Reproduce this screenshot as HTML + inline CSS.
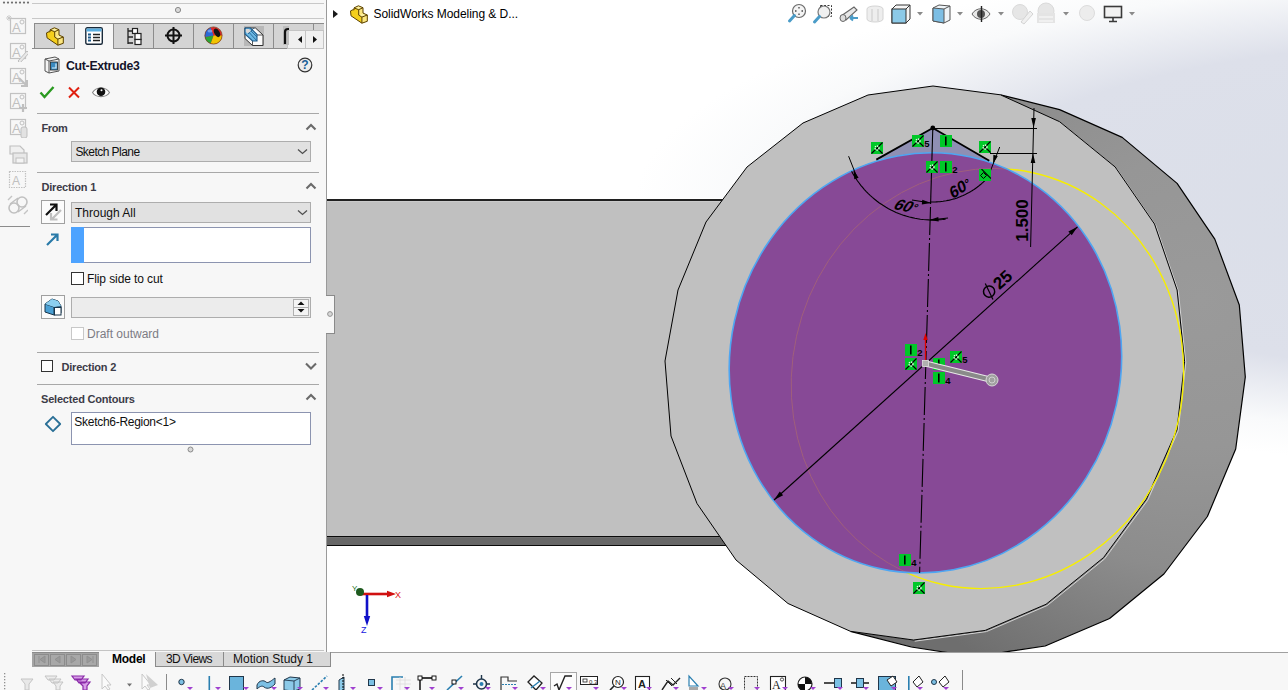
<!DOCTYPE html>
<html><head><meta charset="utf-8">
<style>
*{box-sizing:border-box;margin:0;padding:0}
html,body{width:1288px;height:690px;overflow:hidden;background:#f7f7f7;font-family:"Liberation Sans",sans-serif;position:relative}
.a{position:absolute}
.t{position:absolute;white-space:nowrap;color:#1e1e1e}
</style></head><body>
<div class="a" style="left:327px;top:0;width:961px;height:652px;overflow:hidden;background:radial-gradient(890px 259px at 1197px 205px,#dadee8 0%,#dde0ea 64.4%,#f9fafb 87.7%,#ffffff 100%)"></div>
<div class="a" style="left:326px;top:0;width:1px;height:652px;background:#9a9a9a"></div>
<svg class="a" style="left:0;top:0" width="33" height="6"><circle cx="4" cy="2.6" r="1.1" fill="#707070"/><circle cx="8" cy="2.6" r="1.1" fill="#707070"/><circle cx="12" cy="2.6" r="1.1" fill="#707070"/><circle cx="16" cy="2.6" r="1.1" fill="#707070"/><circle cx="20" cy="2.6" r="1.1" fill="#707070"/><circle cx="24" cy="2.6" r="1.1" fill="#707070"/><circle cx="28" cy="2.6" r="1.1" fill="#707070"/></svg>
<div class="a" style="left:32px;top:3px;width:292px;height:1px;background:#c8c8c8"></div>
<svg class="a" style="left:174px;top:6px" width="8" height="8"><circle cx="4" cy="4" r="2.6" fill="#d8d8d8" stroke="#8a8a8a" stroke-width="1"/></svg>
<div class="a" style="left:32px;top:18px;width:292px;height:1px;background:#c8c8c8"></div>
<div class="a" style="left:34px;top:23px;width:290px;height:26px;background:#d4d4d4;border-top:1px solid #8c8c8c"></div>
<div class="a" style="left:32px;top:48px;width:292px;height:1px;background:#8c8c8c"></div>
<div class="a" style="left:74px;top:23px;width:1px;height:26px;background:#8c8c8c"></div>
<div class="a" style="left:113px;top:23px;width:1px;height:26px;background:#8c8c8c"></div>
<div class="a" style="left:153px;top:23px;width:1px;height:26px;background:#8c8c8c"></div>
<div class="a" style="left:193px;top:23px;width:1px;height:26px;background:#8c8c8c"></div>
<div class="a" style="left:233px;top:23px;width:1px;height:26px;background:#8c8c8c"></div>
<div class="a" style="left:273px;top:23px;width:1px;height:26px;background:#8c8c8c"></div>
<div class="a" style="left:313px;top:23px;width:1px;height:26px;background:#8c8c8c"></div>
<div class="a" style="left:34px;top:23px;width:1px;height:26px;background:#8c8c8c"></div>
<div class="a" style="left:75px;top:24px;width:38px;height:25px;background:#f7f7f7"></div>
<div class="a" style="left:287px;top:30px;width:37px;height:19px;background:#f0f0f0;border:1px solid #c4c4c4"></div>
<div class="a" style="left:305px;top:30px;width:1px;height:19px;background:#c4c4c4"></div>
<svg class="a" style="left:287px;top:30px" width="37" height="19"><polygon points="11,9.5 15,6 15,13" fill="#111"/><polygon points="30,9.5 26,6 26,13" fill="#111"/></svg>
<div class="t" style="left:66px;top:59.79px;font-size:12.3px;line-height:12.3px;font-weight:bold;color:#14142a;letter-spacing:-0.3px">Cut-Extrude3</div>
<svg class="a" style="left:296px;top:56px" width="18" height="18"><circle cx="9" cy="9" r="6.8" fill="#ececec" stroke="#333" stroke-width="1.2"/><text x="9" y="13.2" text-anchor="middle" font-family="Liberation Sans" font-weight="bold" font-size="12" fill="#1a5e96">?</text></svg>
<div class="a" style="left:37px;top:113px;width:282px;height:1px;background:#a8a8a8"></div>
<div class="a" style="left:37px;top:172px;width:282px;height:1px;background:#a8a8a8"></div>
<div class="a" style="left:37px;top:352px;width:282px;height:1px;background:#a8a8a8"></div>
<div class="a" style="left:37px;top:384px;width:282px;height:1px;background:#a8a8a8"></div>
<div class="t" style="left:41.5px;top:122.99px;font-size:11px;line-height:11px;font-weight:bold;color:#3c3c48;letter-spacing:-0.4px">From</div>
<svg class="a" style="left:305px;top:123px" width="12" height="8"><polyline points="1.5,6.5 6,2 10.5,6.5" fill="none" stroke="#6a6a6a" stroke-width="2.1"/></svg>
<div class="a" style="left:71px;top:141px;width:240px;height:21px;background:#e1e1e1;border:1px solid #adadad"></div>
<div class="t" style="left:75.4px;top:146.04px;font-size:12px;line-height:12px;font-weight:normal;color:#101010;letter-spacing:-0.55px">Sketch Plane</div>
<svg class="a" style="left:297px;top:148px" width="11" height="7"><polyline points="1,1.5 5.5,5.5 10,1.5" fill="none" stroke="#505050" stroke-width="1.3"/></svg>
<div class="t" style="left:41.5px;top:181.89px;font-size:11px;line-height:11px;font-weight:bold;color:#3c3c48;letter-spacing:-0.2px">Direction 1</div>
<svg class="a" style="left:305px;top:182px" width="12" height="8"><polyline points="1.5,6.5 6,2 10.5,6.5" fill="none" stroke="#6a6a6a" stroke-width="2.1"/></svg>
<div class="a" style="left:41px;top:200px;width:24px;height:24px;background:#fbfbfb;border:1px solid #a0a0a0"></div>
<div class="a" style="left:71px;top:202px;width:240px;height:21px;background:#e1e1e1;border:1px solid #adadad"></div>
<div class="t" style="left:75px;top:206.84px;font-size:12px;line-height:12px;font-weight:normal;color:#101010;">Through All</div>
<svg class="a" style="left:297px;top:209px" width="11" height="7"><polyline points="1,1.5 5.5,5.5 10,1.5" fill="none" stroke="#505050" stroke-width="1.3"/></svg>
<div class="a" style="left:71px;top:227px;width:240px;height:36px;background:#fff;border:1px solid #8c94b0"></div>
<div class="a" style="left:71px;top:227px;width:13px;height:36px;background:#4da3ff"></div>
<div class="a" style="left:71px;top:272px;width:13px;height:13px;background:#fff;border:1px solid #333"></div>
<div class="t" style="left:87px;top:273.04px;font-size:12px;line-height:12px;font-weight:normal;color:#101010;letter-spacing:-0.1px">Flip side to cut</div>
<div class="a" style="left:41px;top:295px;width:24px;height:24px;background:#fbfbfb;border:1px solid #a0a0a0"></div>
<div class="a" style="left:71px;top:297px;width:240px;height:21px;background:#ececec;border:1px solid #adadad"></div>
<div class="a" style="left:293px;top:299px;width:16px;height:17px;background:#f4f4f4;border:1px solid #b0b0b0"></div>
<div class="a" style="left:293px;top:307px;width:16px;height:1px;background:#b0b0b0"></div>
<svg class="a" style="left:293px;top:299px" width="16" height="17"><polygon points="8,2.5 11.5,6 4.5,6" fill="#111"/><polygon points="8,13.5 11.5,10 4.5,10" fill="#111"/></svg>
<div class="a" style="left:71px;top:327px;width:13px;height:13px;background:#fff;border:1px solid #c8c8c8"></div>
<div class="t" style="left:87px;top:328.04px;font-size:12px;line-height:12px;font-weight:normal;color:#7c7c84;">Draft outward</div>
<div class="a" style="left:41px;top:360px;width:12px;height:12px;background:#fff;border:1px solid #333"></div>
<div class="t" style="left:61.5px;top:361.69px;font-size:11px;line-height:11px;font-weight:bold;color:#3c3c48;letter-spacing:-0.2px">Direction 2</div>
<svg class="a" style="left:305px;top:362px" width="12" height="8"><polyline points="1,1.5 6.0,6.5 11,1.5" fill="none" stroke="#6a6a6a" stroke-width="2.1"/></svg>
<div class="t" style="left:41px;top:393.69px;font-size:11px;line-height:11px;font-weight:bold;color:#3c3c48;letter-spacing:-0.2px">Selected Contours</div>
<svg class="a" style="left:305px;top:393px" width="12" height="8"><polyline points="1.5,6.5 6,2 10.5,6.5" fill="none" stroke="#6a6a6a" stroke-width="2.1"/></svg>
<svg class="a" style="left:44px;top:415px" width="18" height="18"><polygon points="9,1.8 16.2,9 9,16.2 1.8,9" fill="none" stroke="#2a6f96" stroke-width="1.8" stroke-linejoin="round"/></svg>
<div class="a" style="left:71px;top:412px;width:240px;height:33px;background:#fff;border:1px solid #8c94b0"></div>
<div class="t" style="left:74.3px;top:416.04px;font-size:12px;line-height:12px;font-weight:normal;color:#101010;letter-spacing:-0.28px">Sketch6-Region&lt;1&gt;</div>
<svg class="a" style="left:186px;top:445px" width="9" height="9"><circle cx="4.5" cy="4.5" r="2.5" fill="#d8d8d8" stroke="#8a8a8a" stroke-width="1"/></svg>
<div class="a" style="left:0px;top:226px;width:30px;height:1px;background:#8c8c8c"></div>
<svg class="a" style="left:46px;top:27px" width="19" height="19"><g transform="translate(0.5,0.5)"><path d="M0,5.4 L2.7,4.1 L3.5,4.6 V2.4 L7.9,0.3 L12.5,2.2 V7.6 L16.8,9.5 V15.8 L11.4,17.7 L0.5,10.3Z" fill="#f5cf1c"/><path d="M8.2,4.2 L12.5,2.2 V7.6 L8.2,9.6Z M11.4,11.6 L16.8,9.5 V15.8 L11.4,17.7Z" fill="#fbe680"/><path d="M3.5,2.4 L7.9,0.3 L12.5,2.2 L8.2,4.2Z M8.2,9.6 L12.5,7.6 L16.8,9.5 L11.4,11.6Z" fill="#fdf0a0"/><path d="M0,5.4 L2.7,4.1 L3.5,4.6 V2.4 L7.9,0.3 L12.5,2.2 V7.6 L16.8,9.5 V15.8 L11.4,17.7 L0.5,10.3Z M3.5,2.4 L8.2,4.2 L12.5,2.2 M8.2,4.2 V9.6 L11.4,11.6 L16.8,9.5 M11.4,11.6 V17.7" fill="none" stroke="#5a4000" stroke-width="1" stroke-linejoin="round"/></g></svg>
<svg class="a" style="left:85px;top:27px" width="19" height="19"><rect x="0.8" y="0.8" width="16.5" height="16.5" rx="1.5" fill="#fff" stroke="#1a2a3a" stroke-width="1.4"/><rect x="1.5" y="1.5" width="15" height="3" fill="#5aaee0"/><path d="M3,7.5 H6 M3,10.5 H6 M3,13.5 H6" stroke="#1e5a8a" stroke-width="2"/><path d="M8,7.5 H15 M8,10.5 H15 M8,13.5 H15" stroke="#222" stroke-width="1.3"/></svg>
<svg class="a" style="left:125px;top:27px" width="18" height="19"><path d="M3,1 V17 M3,4 H8 M3,10 H8 M3,16 H8" stroke="#222" stroke-width="1.3" fill="none"/><rect x="7.5" y="1.5" width="5" height="5" fill="#fff" stroke="#222" stroke-width="1.2"/><rect x="10" y="6.5" width="6" height="6" fill="#fff" stroke="#222" stroke-width="1.2"/><rect x="10" y="12.5" width="6" height="5" fill="#fff" stroke="#222" stroke-width="1.2"/></svg>
<svg class="a" style="left:164px;top:26px" width="19" height="19"><circle cx="9.5" cy="9.5" r="6" fill="none" stroke="#111" stroke-width="2"/><path d="M9.5,1 V18 M1,9.5 H18" stroke="#111" stroke-width="2"/></svg>
<svg class="a" style="left:204px;top:26px" width="19" height="19"><circle cx="9.5" cy="9.5" r="8.6" fill="#e02828"/><path d="M9.5,9.5 L18.1,9.5 A8.6,8.6 0 0 1 6.6,17.6Z" fill="#f2c400"/><path d="M9.5,9.5 L6.6,17.6 A8.6,8.6 0 0 1 0.9,11Z" fill="#28a838"/><path d="M9.5,9.5 L0.9,11 A8.6,8.6 0 0 1 6.6,1.4Z" fill="#2a6ad8"/><ellipse cx="13" cy="6.8" rx="2.6" ry="4.6" transform="rotate(-28 13 6.8)" fill="#151515"/><circle cx="9.5" cy="9.5" r="8.6" fill="none" stroke="#7a3a1a" stroke-width="0.7"/><ellipse cx="6" cy="5" rx="2.5" ry="1.6" fill="#fff" opacity="0.35"/></svg>
<svg class="a" style="left:244px;top:26px" width="20" height="20"><rect x="0" y="0" width="20" height="20" fill="#b8b8b8"/><path d="M1,2 H11.5 L19,9 V19.5 H8.5 L1,12.5Z" fill="#fafafa" stroke="#333" stroke-width="1"/><path d="M8.5,9 H19 M8.5,9 V19.5 M1,2 L8.5,9" fill="none" stroke="#444" stroke-width="0.9"/><path d="M1,2 H6.5 L13,8.5 V15 H8.5 L1,8Z" fill="#6ab8e4" stroke="#1e5a8a" stroke-width="1.1"/><path d="M1,2 L13,15 M4,8 L10,2 M7,5 L13,11" stroke="#1e5a8a" stroke-width="0.8"/><path d="M1.8,3 H5 L7,5 L3.5,7.5 L1.8,6Z" fill="#d8d8d8"/></svg>
<svg class="a" style="left:283px;top:26px" width="6" height="19"><rect x="0" y="0" width="6" height="19" fill="#bdbdbd"/><path d="M2,18 V6 Q2,3 5,3 H6" fill="none" stroke="#111" stroke-width="2.2"/></svg>
<svg class="a" style="left:44px;top:56px" width="16" height="18"><path d="M1,3 L11,1 L15,3 V15 L5,17 L1,15Z" fill="#f4f4f4" stroke="#555" stroke-width="1"/><path d="M1,3 L5,5 V17 M5,5 L15,3" fill="none" stroke="#555" stroke-width="1"/><rect x="6.5" y="6" width="7" height="8" fill="#3a8ac0" stroke="#222" stroke-width="0.8"/><path d="M8,12 H12 V7.5" fill="none" stroke="#d8eef8" stroke-width="1.2"/></svg>
<svg class="a" style="left:39px;top:85px" width="16" height="14"><path d="M1.5,7.5 L5.5,12 L14.5,2" fill="none" stroke="#2a9a20" stroke-width="2.4"/></svg>
<svg class="a" style="left:67px;top:86px" width="14" height="13"><path d="M2,1.5 L12,11.5 M12,1.5 L2,11.5" stroke="#e02010" stroke-width="2"/></svg>
<svg class="a" style="left:91px;top:85px" width="20" height="14"><path d="M1.5,7.5 C5,1.5 15,1.5 18.5,7.5 C15,13 5,13 1.5,7.5Z" fill="#fff" stroke="#888" stroke-width="1.1"/><circle cx="10" cy="6.8" r="4.3" fill="#111"/><circle cx="10.5" cy="5.3" r="1" fill="#fff"/></svg>
<svg class="a" style="left:41px;top:200px" width="24" height="24"><path d="M5,15 L15,5 M9,4.5 H15.5 V11" fill="none" stroke="#111" stroke-width="2.2"/><path d="M20,10 L11,19 M10,13 V19.5 H16.5" fill="none" stroke="#bfbfbf" stroke-width="2.2"/></svg>
<svg class="a" style="left:45px;top:231px" width="16" height="16"><path d="M2,14 L12,4 M6,3.5 H12.5 V10" fill="none" stroke="#2a7aa8" stroke-width="2.2"/></svg>
<svg class="a" style="left:41px;top:295px" width="24" height="24"><path d="M4,9 L11,4 L17,6 L20,11 V18 L13,20 L4,17Z" fill="#4aa0d4" stroke="#18344a" stroke-width="1"/><path d="M4,9 L13,12 L20,11 M13,12 V20" fill="none" stroke="#18344a" stroke-width="1"/><rect x="13.5" y="12.5" width="6.5" height="7.5" fill="#fff" stroke="#18344a" stroke-width="1"/><path d="M4,9 L11,4 L17,6 L20,11 L13,12Z" fill="#8ccff0"/></svg>
<svg class="a" style="left:6px;top:15px" width="22" height="22"><rect x="4.5" y="3.5" width="15" height="15" fill="none" stroke="#c2c2c2" stroke-width="1.2"/><text x="6" y="16.5" font-family="Liberation Sans" font-size="13" fill="#c0c0c0">A</text><circle cx="16" cy="7" r="2" fill="none" stroke="#c0c0c0" stroke-width="1"/><path d="M1,1 L5,5 M5,1 L1,5 M3,0 V6 M0,3 H6" stroke="#c6c6c6" stroke-width="0.9"/></svg>
<svg class="a" style="left:6px;top:40px" width="22" height="22"><rect x="4.5" y="3.5" width="15" height="15" fill="none" stroke="#c2c2c2" stroke-width="1.2"/><text x="6" y="16.5" font-family="Liberation Sans" font-size="13" fill="#c0c0c0">A</text><circle cx="16" cy="7" r="2" fill="none" stroke="#c0c0c0" stroke-width="1"/><path d="M12,21 L21,11 L23,13 L14,23Z" fill="#e8e8e8" stroke="#bfbfbf" stroke-width="1"/></svg>
<svg class="a" style="left:6px;top:65px" width="22" height="22"><rect x="4.5" y="3.5" width="15" height="15" fill="none" stroke="#c2c2c2" stroke-width="1.2"/><text x="6" y="16.5" font-family="Liberation Sans" font-size="13" fill="#c0c0c0">A</text><circle cx="16" cy="7" r="2" fill="none" stroke="#c0c0c0" stroke-width="1"/><path d="M13,13 L21,21 M21,15 V21 H15" fill="none" stroke="#bfbfbf" stroke-width="2"/></svg>
<svg class="a" style="left:6px;top:90px" width="22" height="22"><rect x="4.5" y="3.5" width="15" height="15" fill="none" stroke="#c2c2c2" stroke-width="1.2"/><text x="6" y="16.5" font-family="Liberation Sans" font-size="13" fill="#c0c0c0">A</text><circle cx="16" cy="7" r="2" fill="none" stroke="#c0c0c0" stroke-width="1"/><path d="M17,14 V22 M13,18 H21" stroke="#bfbfbf" stroke-width="2.2"/></svg>
<svg class="a" style="left:6px;top:116px" width="22" height="22"><rect x="4.5" y="3.5" width="15" height="15" fill="none" stroke="#c2c2c2" stroke-width="1.2"/><text x="6" y="16.5" font-family="Liberation Sans" font-size="13" fill="#c0c0c0">A</text><circle cx="16" cy="7" r="2" fill="none" stroke="#c0c0c0" stroke-width="1"/><rect x="15" y="11" width="6" height="11" rx="2" fill="#e2e2e2" stroke="#bfbfbf" stroke-width="1"/></svg>
<svg class="a" style="left:6px;top:142px" width="22" height="22"><path d="M4,4 H14 L18,8 V12 H4Z" fill="#f0f0f0" stroke="#c0c0c0" stroke-width="1.2"/><rect x="7" y="11" width="14" height="10" fill="#e8e8e8" stroke="#bfbfbf" stroke-width="1.2"/><rect x="10" y="16" width="8" height="5" fill="#f4f4f4" stroke="#bfbfbf" stroke-width="1"/></svg>
<svg class="a" style="left:6px;top:168px" width="22" height="22"><rect x="3.5" y="3.5" width="16" height="16" fill="none" stroke="#c2c2c2" stroke-width="1.2" stroke-dasharray="1.5 1"/><text x="6" y="17" font-family="Liberation Sans" font-size="12" fill="#c0c0c0">A</text></svg>
<svg class="a" style="left:6px;top:194px" width="22" height="22"><circle cx="8" cy="14" r="5" fill="none" stroke="#c0c0c0" stroke-width="1.6"/><circle cx="16" cy="8" r="5" fill="none" stroke="#c0c0c0" stroke-width="1.6"/><path d="M4,10 L12,4 M12,18 L20,12" stroke="#c0c0c0" stroke-width="1.4"/><path d="M2,6 L6,2 M18,20 L22,16" stroke="#c4c4c4" stroke-width="1.4"/></svg>
<svg class="a" style="left:0;top:0" width="1288" height="690" viewBox="0 0 1288 690">
<defs><clipPath id="gc"><rect x="327" y="0" width="961" height="652"/></clipPath><clipPath id="pc"><ellipse cx="925.43" cy="362.83" rx="195.5" ry="210.76" transform="rotate(12.5 925.43 362.83)"/></clipPath><radialGradient id="sideg" gradientUnits="userSpaceOnUse" cx="1200" cy="300" r="420"><stop offset="0" stop-color="#9a9a9a"/><stop offset="0.35" stop-color="#969696"/><stop offset="0.48" stop-color="#929292"/><stop offset="0.64" stop-color="#8c8c8c"/><stop offset="0.84" stop-color="#7b7b7b"/><stop offset="1" stop-color="#6e6e6e"/></radialGradient><symbol id="mc" viewBox="0 0 12 12"><rect width="12" height="12" fill="#00c828"/><path d="M0.5,11.5 L11.5,0.5 M6,6 L11.5,11.5" stroke="#000" stroke-width="1.1"/><circle cx="6" cy="6" r="2" fill="none" stroke="#e8ffe8" stroke-width="1.3" stroke-dasharray="1.3 0.8"/></symbol>
<symbol id="mv" viewBox="0 0 12 12"><rect width="12" height="12" fill="#00c828"/><rect x="5" y="1.5" width="1.6" height="9" fill="#000"/></symbol>
<symbol id="md" viewBox="0 0 12 12"><rect width="12" height="12" fill="#00c828"/><path d="M2.5,0 L12,9.5" stroke="#000" stroke-width="1.1"/><polygon points="1.5,6.5 4.5,3.5 7.5,6.5 4.5,9.5" fill="none" stroke="#000" stroke-width="1"/></symbol></defs>
<g clip-path="url(#gc)">
<rect x="320" y="198" width="420" height="1" fill="#ffffff"/>
<rect x="320" y="199" width="420" height="2" fill="#202020"/>
<rect x="320" y="201" width="420" height="1" fill="#cacaca"/>
<rect x="320" y="202" width="420" height="334" fill="#c0c0c0"/>
<rect x="320" y="536" width="420" height="1" fill="#0a0a0a"/>
<rect x="320" y="537" width="420" height="1" fill="#707070"/>
<rect x="320" y="538" width="420" height="7" fill="#676767"/>
<rect x="320" y="545" width="420" height="1" fill="#0a0a0a"/>
<polygon points="1000.4,94.8 1059.6,109.6 1122.2,137.4 1177.1,183.4 1214.8,239.1 1239.3,305.0 1245.3,377.0 1235.7,449.0 1207.4,516.5 1163.9,574.0 1109.6,618.5 1045.2,646.0 1010.4,651.2 975.0,657.0 944.0,652.0 911.3,647.0 850.4,631.3 913.5,640.0 985.2,630.4 1046.0,604.3 1103.5,557.6 1146.5,499.0 1177.0,429.6 1184.6,361.6 1177.1,290.0 1154.5,224.0 1115.2,167.0 1059.6,121.7 1000.4,94.8" fill="url(#sideg)" stroke="none"/>
<polyline points="1000.4,94.8 1059.6,109.6 1122.2,137.4 1177.1,183.4 1214.8,239.1 1239.3,305.0 1245.3,377.0 1235.7,449.0 1207.4,516.5 1163.9,574.0 1109.6,618.5 1045.2,646.0 1010.4,651.2 975.0,657.0 944.0,652.0 911.3,647.0 850.4,631.3" fill="none" stroke="#000" stroke-width="1.2" stroke-linejoin="round"/>
<polyline points="1001.6,96.0 1060.8,122.9 1116.4,168.2 1155.7,225.2 1178.3,291.2 1185.8,362.8 1178.2,430.8 1147.7,500.2 1104.7,558.8 1047.2,605.5 986.4,631.6 914.7,641.2" fill="none" stroke="#d4d4d4" stroke-width="1"/>
<polygon points="933.0,86.0 1000.4,94.8 1059.6,121.7 1115.2,167.0 1154.5,224.0 1177.1,290.0 1184.6,361.6 1177.0,429.6 1146.5,499.0 1103.5,557.6 1046.0,604.3 985.2,630.4 913.5,640.0 850.4,631.3 788.0,603.5 736.0,560.0 697.0,503.5 671.0,436.0 665.0,361.0 678.0,290.0 706.0,222.0 747.0,167.0 803.0,123.0 868.0,95.0" fill="#c0c0c0" stroke="#000" stroke-width="1" stroke-linejoin="round"/>
<ellipse cx="987.4" cy="378.5" rx="195.5" ry="210.76" transform="rotate(12.5 987.4 378.5)" fill="none" stroke="#f6ee00" stroke-width="1.4"/>
<polygon points="932.8,128 876.3,159.6 932,152 989.3,160.7" fill="#8f8fb3"/>
<ellipse cx="925.43" cy="362.83" rx="195.5" ry="210.76" transform="rotate(12.5 925.43 362.83)" fill="#874996"/>
<g clip-path="url(#pc)"><ellipse cx="987.4" cy="378.5" rx="195.5" ry="210.76" transform="rotate(12.5 987.4 378.5)" fill="none" stroke="#a0607a" stroke-width="0.9"/></g>
<ellipse cx="925.43" cy="362.83" rx="195.5" ry="210.76" transform="rotate(12.5 925.43 362.83)" fill="none" stroke="#4ea6f2" stroke-width="1.6"/>
<polyline points="876.3,159.6 932.8,128 989.3,160.7" fill="none" stroke="#000" stroke-width="1.8" stroke-linejoin="round"/>
<circle cx="932.8" cy="128" r="2.4" fill="#000"/>
<line x1="932.8" y1="128" x2="930.6" y2="204" stroke="#000" stroke-width="1.1"/>
<line x1="930.6" y1="204" x2="919.6" y2="573" stroke="#000" stroke-width="1.1" stroke-dasharray="28 3 2 3" stroke-dashoffset="33"/>
<line x1="933" y1="128.5" x2="1037" y2="128.5" stroke="#000" stroke-width="1"/>
<line x1="990" y1="153.5" x2="1037" y2="153.5" stroke="#000" stroke-width="1"/>
<line x1="1034" y1="108" x2="1030.6" y2="247" stroke="#000" stroke-width="1"/>
<polygon points="1033.6,128.0 1031.3,118.0 1035.9,118.0" fill="#000"/>
<polygon points="1033.0,153.0 1035.3,163.0 1030.7,163.0" fill="#000"/>
<text x="0" y="0" transform="translate(1027.5,220.5) rotate(-90)" text-anchor="middle" font-family="Liberation Sans" font-weight="bold" font-size="17" fill="#000">1.500</text>
<line x1="774" y1="500" x2="1077.5" y2="226.8" stroke="#000" stroke-width="1.1"/>
<polygon points="774.0,500.0 779.8,491.5 783.1,495.2" fill="#000"/>
<polygon points="1077.5,226.8 1071.7,235.3 1068.4,231.6" fill="#000"/>
<g transform="translate(989.1,291.6) rotate(-42)"><circle cx="0" cy="0" r="5.6" fill="none" stroke="#000" stroke-width="1.5"/><line x1="2.5" y1="-8.5" x2="-2.5" y2="8.5" stroke="#000" stroke-width="1.2"/><text x="8.5" y="6" font-family="Liberation Sans" font-size="17" font-weight="bold" fill="#000">25</text></g>
<polyline points="851.6,171.2 852.9,173.7 854.4,176.1 855.9,178.4 857.4,180.8 859.1,183.0 860.8,185.3 862.6,187.4 864.4,189.6 866.3,191.6 868.3,193.6 870.4,195.6 872.4,197.4 874.6,199.2 876.8,201.0 879.0,202.7 881.4,204.3 883.7,205.8 886.1,207.3 888.5,208.7 891.0,210.0 893.6,211.2 896.1,212.4 898.7,213.5 901.3,214.5 904.0,215.4 906.7,216.2 909.4,217.0 912.1,217.6 914.9,218.2 917.6,218.7 920.4,219.2 923.2,219.5 926.0,219.7 928.8,219.9 931.6,220.0 934.4,220.0 937.2,219.9 940.0,219.7 942.8,219.5 945.6,219.1" fill="none" stroke="#000" stroke-width="1.1"/>
<line x1="930" y1="220" x2="948" y2="218" stroke="#000" stroke-width="1.1"/>
<polygon points="929.5,220.0 938.3,217.0 938.7,221.6" fill="#000"/>
<polygon points="853.5,170.0 858.6,177.7 854.3,179.3" fill="#000"/>
<line x1="848.6" y1="156.2" x2="856" y2="175" stroke="#000" stroke-width="1"/>
<polyline points="930.2,202.0 931.8,202.0 933.4,202.0 935.1,202.0 936.7,201.9 938.3,201.8 939.9,201.7 941.5,201.5 943.1,201.3 944.7,201.0 946.3,200.8 947.9,200.4 949.4,200.1 951.0,199.7 952.6,199.3 954.1,198.9 955.7,198.4 957.2,197.9 958.7,197.3 960.2,196.7 961.7,196.1 963.2,195.5 964.7,194.8 966.1,194.1 967.5,193.3 969.0,192.6 970.4,191.8 971.7,190.9 973.1,190.1 974.4,189.2 975.8,188.2 977.1,187.3 978.4,186.3 979.6,185.3 980.9,184.3 982.1,183.2 983.3,182.1 984.4,181.0 985.6,179.9 986.7,178.7 987.8,177.5" fill="none" stroke="#000" stroke-width="1.1"/>
<line x1="912" y1="200" x2="931" y2="203" stroke="#000" stroke-width="1.1"/>
<polygon points="931.0,203.0 921.8,204.4 922.3,199.8" fill="#000"/>
<line x1="999.7" y1="147" x2="990" y2="172" stroke="#000" stroke-width="1"/>
<polygon points="993.0,164.0 993.4,154.7 997.8,156.0" fill="#000"/>
<text x="0" y="0" transform="translate(903,211) rotate(12) skewX(-22)" text-anchor="middle" font-family="Liberation Sans" font-size="16" font-weight="bold" fill="#000">60<tspan font-size="11" dy="-2">°</tspan></text>
<text x="0" y="0" transform="translate(962,193) rotate(-33) skewX(-12)" text-anchor="middle" font-family="Liberation Sans" font-size="16" font-weight="bold" fill="#000">60<tspan font-size="12" dy="-1">°</tspan></text>
<line x1="925.5" y1="363.5" x2="925.5" y2="338" stroke="#e00000" stroke-width="1.3"/>
<polygon points="925.5,333.0 927.7,340.0 923.3,340.0" fill="#e00000"/>
<use href="#mc" x="871" y="142" width="12" height="12"/>
<use href="#mc" x="912" y="135" width="12" height="12"/><text x="924.3" y="146.5" font-family="Liberation Sans" font-weight="bold" font-size="9.5" fill="#000">5</text>
<use href="#mv" x="940" y="135" width="12" height="12"/>
<use href="#mc" x="979" y="141" width="12" height="12"/>
<use href="#mc" x="926" y="161" width="12" height="12"/>
<use href="#mv" x="940" y="161" width="12" height="12"/><text x="952.3" y="172.5" font-family="Liberation Sans" font-weight="bold" font-size="9.5" fill="#000">2</text>
<use href="#md" x="979" y="169" width="12" height="12"/>
<use href="#mv" x="905" y="344" width="12" height="12"/><text x="917.3" y="355.5" font-family="Liberation Sans" font-weight="bold" font-size="9.5" fill="#000">2</text>
<use href="#mc" x="905" y="358" width="12" height="12"/>
<use href="#mv" x="933" y="358" width="12" height="12"/>
<use href="#mv" x="933" y="372" width="12" height="12"/><text x="945.3" y="383.5" font-family="Liberation Sans" font-weight="bold" font-size="9.5" fill="#000">4</text>
<use href="#mc" x="950" y="351" width="12" height="12"/><text x="962.3" y="362.5" font-family="Liberation Sans" font-weight="bold" font-size="9.5" fill="#000">5</text>
<use href="#mv" x="899" y="554" width="12" height="12"/><text x="911.3" y="565.5" font-family="Liberation Sans" font-weight="bold" font-size="9.5" fill="#000">4</text>
<use href="#mc" x="913" y="582" width="12" height="12"/>
<line x1="925.5" y1="363.5" x2="992" y2="380" stroke="#e8e8e8" stroke-width="6"/>
<line x1="925.5" y1="363.5" x2="992" y2="380" stroke="#8a8a8a" stroke-width="4"/>
<rect x="922.5" y="360.5" width="6" height="6" fill="#b0b0b0" stroke="#e0e0e0" stroke-width="0.8"/>
<circle cx="992" cy="380" r="6" fill="#a0a0a0" stroke="#d8d8d8" stroke-width="1"/><circle cx="992" cy="380" r="3" fill="none" stroke="#d0d0d0" stroke-width="1"/>
<line x1="360" y1="594" x2="388" y2="594" stroke="#d01010" stroke-width="2.6"/>
<polygon points="396.0,594.0 387.0,597.2 387.0,590.8" fill="#d01010"/>
<text x="395" y="598" font-family="Liberation Sans" font-size="9" fill="#e02020">X</text>
<line x1="367" y1="595" x2="367" y2="617" stroke="#1010c8" stroke-width="2.6"/>
<polygon points="367.0,626.0 363.8,616.0 370.2,616.0" fill="#1010c8"/>
<text x="361" y="633" font-family="Liberation Sans" font-size="9" fill="#2020e0">Z</text>
<circle cx="360" cy="592" r="4" fill="#1e5a1e"/>
<text x="352" y="591" font-family="Liberation Sans" font-size="8" fill="#207020">Y</text>
</g></svg>
<div class="a" style="left:327px;top:652px;width:961px;height:1px;background:#a0a0a0"></div>
<div class="a" style="left:32px;top:650px;width:292px;height:1px;background:#c4c4c4"></div>
<div class="a" style="left:326px;top:295px;width:9px;height:39px;background:#f7f7f7;border:1px solid #8a8a8a;border-left:none"></div>
<svg class="a" style="left:326px;top:310px" width="8" height="8"><circle cx="4" cy="4" r="2.4" fill="#d8d8d8" stroke="#8a8a8a" stroke-width="0.9"/></svg>
<div class="a" style="left:32px;top:652px;width:67px;height:15px;background:#a4a4a4;border-top:1px solid #8a8a8a"></div>
<div class="a" style="left:34px;top:654px;width:15px;height:12px;border:1px solid #8c8c8c;background:#a8a8a8"></div>
<div class="a" style="left:50px;top:654px;width:15px;height:12px;border:1px solid #8c8c8c;background:#a8a8a8"></div>
<div class="a" style="left:66px;top:654px;width:15px;height:12px;border:1px solid #8c8c8c;background:#a8a8a8"></div>
<div class="a" style="left:82px;top:654px;width:15px;height:12px;border:1px solid #8c8c8c;background:#a8a8a8"></div>
<svg class="a" style="left:32px;top:652px" width="67" height="15"><path d="M7,4 V11 M13,4 L8,7.5 L13,11Z" stroke="#909090" fill="#9a9a9a" stroke-width="1"/><path d="M28,4 L23,7.5 L28,11Z" stroke="#909090" fill="#9a9a9a" stroke-width="1"/><path d="M39,4 L44,7.5 L39,11Z" stroke="#909090" fill="#9a9a9a" stroke-width="1"/><path d="M55,4 L60,7.5 L55,11Z M61,4 V11" stroke="#909090" fill="#9a9a9a" stroke-width="1"/></svg>
<div class="t" style="left:112px;top:652.84px;font-size:12px;line-height:12px;font-weight:bold;color:#000;letter-spacing:-0.25px">Model</div>
<div class="a" style="left:155px;top:652px;width:69px;height:15px;background:#d8d8d8;border:1px solid #8a8a8a;border-top:none"></div>
<div class="t" style="left:166px;top:652.84px;font-size:12px;line-height:12px;font-weight:normal;color:#101010;letter-spacing:-0.55px">3D Views</div>
<div class="a" style="left:223px;top:652px;width:108px;height:15px;background:#d8d8d8;border:1px solid #8a8a8a;border-top:none"></div>
<div class="t" style="left:233px;top:652.84px;font-size:12px;line-height:12px;font-weight:normal;color:#101010;">Motion Study 1</div>
<svg class="a" style="left:330px;top:8px" width="10" height="12"><polygon points="3,2 8,6 3,10" fill="#1a1a1a"/></svg>
<svg class="a" style="left:350px;top:5px" width="19" height="19"><g transform="translate(0.5,0.5)"><path d="M0,5.4 L2.7,4.1 L3.5,4.6 V2.4 L7.9,0.3 L12.5,2.2 V7.6 L16.8,9.5 V15.8 L11.4,17.7 L0.5,10.3Z" fill="#f5cf1c"/><path d="M8.2,4.2 L12.5,2.2 V7.6 L8.2,9.6Z M11.4,11.6 L16.8,9.5 V15.8 L11.4,17.7Z" fill="#fbe680"/><path d="M3.5,2.4 L7.9,0.3 L12.5,2.2 L8.2,4.2Z M8.2,9.6 L12.5,7.6 L16.8,9.5 L11.4,11.6Z" fill="#fdf0a0"/><path d="M0,5.4 L2.7,4.1 L3.5,4.6 V2.4 L7.9,0.3 L12.5,2.2 V7.6 L16.8,9.5 V15.8 L11.4,17.7 L0.5,10.3Z M3.5,2.4 L8.2,4.2 L12.5,2.2 M8.2,4.2 V9.6 L11.4,11.6 L16.8,9.5 M11.4,11.6 V17.7" fill="none" stroke="#5a4000" stroke-width="1" stroke-linejoin="round"/></g></svg>
<div class="t" style="left:373.5px;top:8.44px;font-size:12px;line-height:12px;font-weight:normal;color:#000;letter-spacing:-0.05px">SolidWorks Modeling &amp; D...</div>
<svg class="a" style="left:780px;top:0" width="360" height="28"><circle cx="19" cy="11" r="6.5" fill="#f4f4f4" stroke="#6a6a6a" stroke-width="1.2"/><path d="M19,7 V8.5 M15,11 H16.5 M23,11 H21.5 M19,15 V13.5" stroke="#444" stroke-width="1.3"/><line x1="14.5" y1="15.5" x2="9.5" y2="21" stroke="#4a9cc8" stroke-width="3" stroke-linecap="round"/><rect x="40.5" y="5.5" width="11" height="11" fill="none" stroke="#333" stroke-width="1" stroke-dasharray="2 1.5"/><circle cx="44" cy="12" r="6" fill="#f0f0f0" stroke="#777" stroke-width="1.2"/><line x1="39.5" y1="16.5" x2="34.5" y2="22" stroke="#4a9cc8" stroke-width="3" stroke-linecap="round"/><path d="M61,16 L74,7 L77,10 L66,20Z" fill="#e8e8e8" stroke="#666" stroke-width="1.1"/><ellipse cx="63" cy="18" rx="3" ry="3.5" fill="#ddd" stroke="#666" stroke-width="1"/><path d="M70,18 H78 M70,18 L73,15.5 M70,18 L73,20.5" stroke="#4a9cc8" stroke-width="2"/><path d="M87,9 C87,5 103,5 103,9 V19 C103,23 87,23 87,19Z" fill="#eeeeee" stroke="#d4d4d4" stroke-width="1"/><path d="M92,9 V21 M98,9 V21" stroke="#dcdcdc" stroke-width="2"/><path d="M112,9 L116,5 H130 V19 L126,23 H112Z" fill="#f6f6f6" stroke="#333" stroke-width="1"/><rect x="112" y="9" width="14" height="14" fill="#8ccae8" stroke="#333" stroke-width="1"/><path d="M126,9 L130,5" stroke="#333" stroke-width="1"/><polygon points="137,12 143,12 140,15.5" fill="#8a8a8a"/><path d="M153,8 L159,5 L170,6 V20 L164,23 L153,21Z" fill="#eef4f8" stroke="#555" stroke-width="1"/><path d="M153,8 L164,9 V23 L153,21Z" fill="#7cbee4" stroke="#555" stroke-width="1"/><path d="M164,9 L170,6" stroke="#555" stroke-width="1"/><polygon points="177,12 183,12 180,15.5" fill="#8a8a8a"/><path d="M192,14 C196,7 206,7 210,14 C206,21 196,21 192,14Z" fill="#e8e8e8" stroke="#666" stroke-width="1"/><circle cx="201" cy="14" r="4" fill="#555"/><line x1="201.5" y1="6" x2="201.5" y2="22" stroke="#222" stroke-width="1.4"/><polygon points="218,12 224,12 221,15.5" fill="#8a8a8a"/><circle cx="240" cy="12" r="7.5" fill="#e6e6e6" stroke="#dadada" stroke-width="1"/><path d="M241,22 L250,11 L253,14 L244,24Z" fill="#f0f0f0" stroke="#d4d4d4" stroke-width="1"/><circle cx="266" cy="11" r="8" fill="#e6e6e6" stroke="#dadada" stroke-width="1"/><rect x="257" y="13" width="18" height="10" fill="#e4e4e4"/><path d="M259,17 H273 M259,21 H273" stroke="#f4f4f4" stroke-width="1.5"/><polygon points="283,12 289,12 286,15.5" fill="#8a8a8a"/><circle cx="307" cy="13" r="7.5" fill="#ececec" stroke="#dcdcdc" stroke-width="1"/><rect x="324.5" y="6.5" width="17" height="11" fill="#f2f2f2" stroke="#3a3a3a" stroke-width="1.6"/><path d="M333,18 V21 M329,21.5 H337" stroke="#3a3a3a" stroke-width="1.6"/><polygon points="349,12 355,12 352,15.5" fill="#8a8a8a"/></svg>
<svg class="a" style="left:0;top:668px" width="980" height="22"><rect x="4" y="5" width="1.3" height="1.3" fill="#909090"/><rect x="4" y="8" width="1.3" height="1.3" fill="#909090"/><rect x="4" y="11" width="1.3" height="1.3" fill="#909090"/><rect x="4" y="14" width="1.3" height="1.3" fill="#909090"/><rect x="4" y="17" width="1.3" height="1.3" fill="#909090"/><rect x="4" y="20" width="1.3" height="1.3" fill="#909090"/><path d="M21,11 H33 L29,16 V22 H25 V16Z" fill="#e8e8e8" stroke="#c4c4c4" stroke-width="1"/><path d="M45,8 H57 L54,12 H48Z M49,11 H61 L58,15 H52Z M53,14 H63 L60,18 V22 H56 V18Z" fill="#ececec" stroke="#c4c4c4" stroke-width="1"/><path d="M72,8 H84 L81,12 H75Z M76,11 H88 L85,15 H79Z M79,14 H90 L87,18 V22 H83 V18Z" fill="#d89ee8" stroke="#8a2aa8" stroke-width="1.2"/><path d="M102,6 V21 L105,18 L108,22 L110,21 L107,17 H111Z" fill="#fafafa" stroke="#c8c8c8" stroke-width="1"/><polygon points="127,15.5 132,15.5 129.5,18.5" fill="#707070"/><path d="M142,6 V21 L145,18 L148,22 L150,21 L147,17 H151Z" fill="#fafafa" stroke="#c8c8c8" stroke-width="1"/><path d="M146,6 L158,17 L150,20Z" fill="#d0d0d0"/><rect x="166" y="6" width="1" height="16" fill="#8a8a8a"/><circle cx="181.5" cy="14" r="2.7" fill="#7cc0e4" stroke="#20364a" stroke-width="1"/><polygon points="187,19 193,19 190,22" fill="#a040d0"/><rect x="208.5" y="8" width="1.6" height="14" fill="#2a7fb0"/><polygon points="215,19 221,19 218,22" fill="#a040d0"/><rect x="229.5" y="8.5" width="14" height="14" fill="#6ab4dc" stroke="#20364a" stroke-width="1"/><polygon points="243,19 249,19 246,22" fill="#a040d0"/><path d="M257,17 C259,12 264,12 266,14 C268,16 272,12 275,10 V16 C272,19 268,22 264,19 C262,17 259,19 257,21Z" fill="#7cc0e4" stroke="#20364a" stroke-width="1"/><polygon points="271,19 277,19 274,22" fill="#a040d0"/><path d="M284,12 L290,9 L300,10 V21 L294,23 L284,22Z" fill="#8ccae8" stroke="#20364a" stroke-width="1"/><path d="M284,12 L294,13 L300,10 M294,13 V23" fill="none" stroke="#20364a" stroke-width="0.9"/><polygon points="297,19 303,19 300,22" fill="#a040d0"/><line x1="312" y1="22" x2="327" y2="8" stroke="#2a7fb0" stroke-width="1.6" stroke-dasharray="2.5 1.5"/><polygon points="323,19 329,19 326,22" fill="#a040d0"/><path d="M339,12 L344,9 V22 L339,23Z" fill="#8ccae8" stroke="#20364a" stroke-width="1"/><line x1="343" y1="6" x2="343" y2="22" stroke="#000" stroke-width="1" stroke-dasharray="2 1"/><polygon points="350,19 356,19 353,22" fill="#a040d0"/><rect x="368.5" y="11.5" width="6" height="6" fill="#7cc0e4" stroke="#20364a" stroke-width="1"/><polygon points="377,19 383,19 380,22" fill="#a040d0"/><path d="M392,22 V9 H403" fill="none" stroke="#2a7fb0" stroke-width="1.6"/><path d="M396,12 H411 M396,16 H411 M400,9 V22 M405,9 V22" stroke="#dcdcdc" stroke-width="0.8"/><polygon points="404,19 410,19 407,22" fill="#a040d0"/><path d="M420,22 V10 H434" fill="none" stroke="#000" stroke-width="1.4"/><rect x="418" y="8" width="4" height="4" fill="#fff" stroke="#000" stroke-width="0.9"/><rect x="432" y="8" width="4" height="4" fill="#fff" stroke="#000" stroke-width="0.9"/><polygon points="429,19 435,19 432,22" fill="#a040d0"/><line x1="447" y1="22" x2="462" y2="8" stroke="#2a7fb0" stroke-width="1.6"/><rect x="452" y="12" width="4" height="4" fill="#fff" stroke="#000" stroke-width="0.9"/><polygon points="458,19 464,19 461,22" fill="#a040d0"/><circle cx="481.5" cy="16" r="5" fill="none" stroke="#20364a" stroke-width="1.6"/><circle cx="481.5" cy="16" r="2" fill="#2a7fb0"/><path d="M481.5,7 V11 M473,16 H476 M487,16 H490" stroke="#20364a" stroke-width="1.4"/><polygon points="485,19 491,19 488,22" fill="#a040d0"/><path d="M501,22 V9 H508 V13 H517" fill="none" stroke="#333" stroke-width="1.2"/><line x1="502" y1="16.5" x2="517" y2="16.5" stroke="#2a7fb0" stroke-width="1" stroke-dasharray="2 1"/><polygon points="512,19 518,19 515,22" fill="#a040d0"/><path d="M528,14 L534,8 L542,15 L536,22Z" fill="#fff" stroke="#222" stroke-width="1.3"/><line x1="531" y1="20" x2="540" y2="13" stroke="#2a7fb0" stroke-width="1.4"/><polygon points="540,19 546,19 543,22" fill="#a040d0"/><rect x="550.5" y="4.5" width="26" height="18" fill="#fcfcfc" stroke="#a8a8a8" stroke-width="1"/><path d="M554,18 L557,16 L559,22 L565,8 H572" fill="none" stroke="#222" stroke-width="1.4"/><polygon points="566,19 572,19 569,22" fill="#a040d0"/><rect x="580.5" y="8.5" width="17" height="8" fill="#fff" stroke="#222" stroke-width="1"/><rect x="583" y="11" width="4" height="3" fill="none" stroke="#222" stroke-width="0.8"/><text x="589" y="15.5" font-family="Liberation Sans" font-size="6" fill="#222">0.3</text><polygon points="593,19 599,19 596,22" fill="#a040d0"/><circle cx="618" cy="14" r="5.5" fill="#fff" stroke="#222" stroke-width="1.2"/><text x="615" y="17" font-family="Liberation Sans" font-size="8" fill="#222">N</text><line x1="614" y1="18" x2="610" y2="22" stroke="#222" stroke-width="1.6"/><polygon points="621,19 627,19 624,22" fill="#a040d0"/><rect x="635.5" y="8.5" width="14" height="14" fill="#fff" stroke="#222" stroke-width="1.1"/><text x="638" y="20" font-family="Liberation Sans" font-size="11" font-weight="bold" fill="#222">A</text><polygon points="646,19 652,19 649,22" fill="#a040d0"/><path d="M662,22 L668,13 L673,17 L680,10" fill="none" stroke="#222" stroke-width="1.4"/><path d="M666,12 L672,18 M671,10 L677,16" stroke="#222" stroke-width="1"/><polygon points="673,19 679,19 676,22" fill="#a040d0"/><path d="M689,8 V18 H698 Z" fill="#fff" stroke="#2a7fb0" stroke-width="1.2"/><path d="M689,20 H698 M689,22 H698" stroke="#333" stroke-width="0.8"/><polygon points="701,19 707,19 704,22" fill="#a040d0"/><circle cx="725" cy="16" r="6" fill="none" stroke="#333" stroke-width="1.1"/><text x="720" y="21" font-family="Liberation Sans" font-size="9" fill="#333">A</text><polygon points="728,19 734,19 731,22" fill="#a040d0"/><rect x="744.5" y="8.5" width="13" height="14" fill="#f0f0f0" stroke="#333" stroke-width="1" stroke-dasharray="2 1"/><polygon points="754,19 760,19 757,22" fill="#a040d0"/><rect x="770.5" y="8.5" width="15" height="14" fill="#fff" stroke="#222" stroke-width="1.1"/><text x="772" y="21" font-family="Liberation Serif" font-size="12" fill="#222">A</text><circle cx="782" cy="11.5" r="1.6" fill="none" stroke="#222" stroke-width="0.8"/><polygon points="782,19 788,19 785,22" fill="#a040d0"/><circle cx="805" cy="16" r="7" fill="#fff" stroke="#222" stroke-width="1.2"/><path d="M805,9 A7,7 0 0 1 812,16 H805Z M805,16 V23 A7,7 0 0 1 798,16Z" fill="#111"/><polygon points="810,19 816,19 813,22" fill="#a040d0"/><path d="M824,15 H834" stroke="#222" stroke-width="1.6"/><rect x="834.5" y="10.5" width="7" height="9" fill="#7cc0e4" stroke="#20364a" stroke-width="1"/><polygon points="837,19 843,19 840,22" fill="#a040d0"/><path d="M851,15 H869" stroke="#222" stroke-width="1.6"/><rect x="856.5" y="10.5" width="7" height="9" fill="#7cc0e4" stroke="#20364a" stroke-width="1"/><polygon points="863,19 869,19 866,22" fill="#a040d0"/><rect x="878.5" y="8.5" width="17" height="14" fill="#6ab4dc" stroke="#20364a" stroke-width="1"/><path d="M887,12 L893,8 L897,14 L891,18Z" fill="#fff" stroke="#222" stroke-width="1"/><polygon points="891,19 897,19 894,22" fill="#a040d0"/><rect x="908" y="8" width="1.6" height="14" fill="#2a7fb0"/><path d="M913,14 L919,8 L923,14 L917,19Z" fill="#fff" stroke="#222" stroke-width="1"/><polygon points="917,19 923,19 920,22" fill="#a040d0"/><circle cx="934" cy="14" r="2.5" fill="#7cc0e4" stroke="#20364a" stroke-width="1"/><path d="M939,14 L945,8 L949,14 L943,19Z" fill="#fff" stroke="#222" stroke-width="1"/><polygon points="943,19 949,19 946,22" fill="#a040d0"/><rect x="962" y="2" width="1" height="20" fill="#8a8a8a"/></svg>
</body></html>
